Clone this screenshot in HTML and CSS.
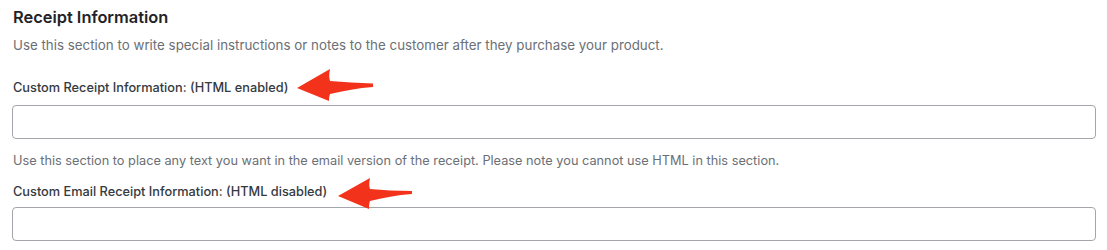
FILE: index.html
```html
<!DOCTYPE html>
<html>
<head>
<meta charset="utf-8">
<link rel="stylesheet" href="styles.css">
</head>
<body>
<div class="section">
  <h2 class="title">Receipt Information</h2>
  <p class="desc first">Use this section to write special instructions or notes to the customer after they purchase your product.</p>
  <div class="field field-1">
    <div class="label-row">
      <label class="label">Custom Receipt Information: (HTML enabled)</label>
      <svg class="arrow" width="80" height="36" viewBox="0 0 80 36">
        <path d="M1 21 L34 2 C33 7 33 11 34 14 C48 15 62 16 77 16.5 L77 20 C62 21 48 24 34 27 C33 30 33 31 33 34 Z" fill="#f3321b"/>
      </svg>
    </div>
    <div class="input"></div>
  </div>
  <p class="desc second">Use this section to place any text you want in the email version of the receipt. Please note you cannot use HTML in this section.</p>
  <div class="field field-2">
    <div class="label-row">
      <label class="label">Custom Email Receipt Information: (HTML disabled)</label>
      <svg class="arrow" width="80" height="36" viewBox="0 0 80 36">
        <path d="M1 21 L33 3 C32 8 32 11 33 14 C46 15 60 16 75 16 L75 19 C60 20 46 23 33 26 C32 29 32 31 32 34 Z" fill="#f3321b"/>
      </svg>
    </div>
    <div class="input"></div>
  </div>
</div>
</body>
</html>
```
FILE: styles.css
```css
html, body {
  margin: 0;
  padding: 0;
  background: #ffffff;
}
body {
  font-family: Inter, "Noto Sans", sans-serif;
}
.section {
  padding: 7px 11px 0 12px;
  display: flex;
  flex-direction: column;
}
.title {
  margin: 0 0 0 1px;
  font-size: 16.4px;
  line-height: 20px;
  font-weight: 600;
  color: #1f2328;
}
.desc {
  margin: 0 0 0 1px;
  font-size: 12.75px;
  line-height: 16px;
  color: #6b6f76;
}
.desc.first {
  margin-top: 10px;
  font-size: 13.35px;
}
.desc.second {
  margin-top: 14px;
}
.field {
  display: flex;
  flex-direction: column;
}
.label-row {
  position: relative;
  display: flex;
}
.label {
  margin-left: 1px;
  font-size: 12.75px;
  line-height: 16px;
  font-weight: 500;
  color: #353a40;
}
.field-1 .label-row {
  margin-top: 27px;
}
.field-2 .label-row {
  margin-top: 15px;
}
.input {
  height: 32px;
  border: 1px solid #a3a6aa;
  border-radius: 4px;
  background: #fff;
}
.field-1 .input {
  margin-top: 9px;
}
.field-2 .input {
  margin-top: 7px;
}
.arrow {
  position: absolute;
}
.field-1 .arrow {
  left: 284px;
  top: -13px;
}
.field-2 .arrow {
  left: 325px;
  top: -9px;
}
```
